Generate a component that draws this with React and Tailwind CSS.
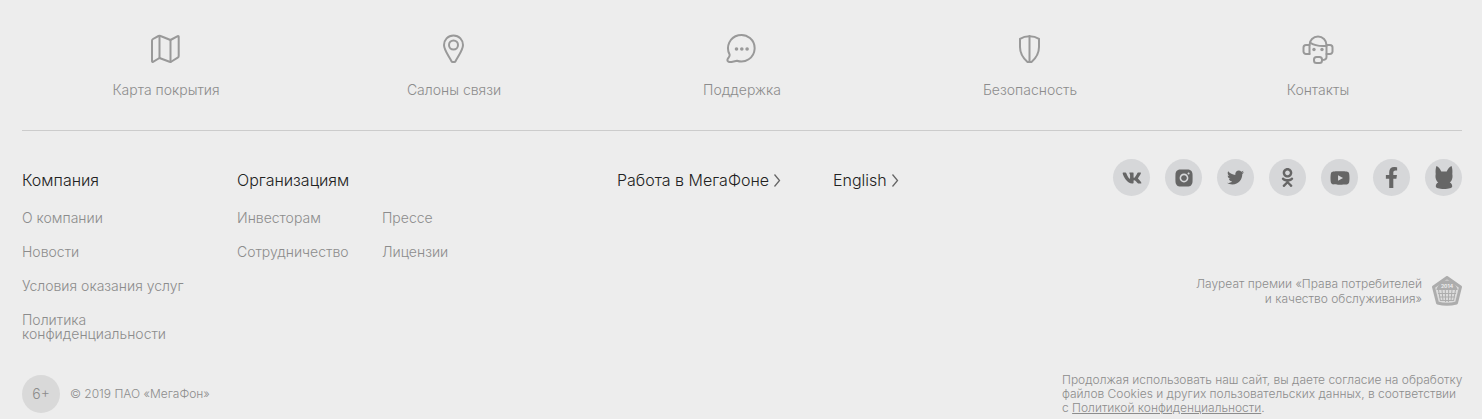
import { FaVk, FaTwitter, FaOdnoklassniki, FaYoutube, FaFacebookF } from 'react-icons/fa'
import { AiFillInstagram } from 'react-icons/ai'

const line = { fill: 'none', stroke: '#999', strokeWidth: 2, strokeLinejoin: 'round', strokeLinecap: 'round' }

function MapIcon() {
  return (
    <svg width="32" height="32" viewBox="0 0 32 32" {...line}>
      <path d="M2 7.500a2 2 0 0 1 1-1.500L8.500 3q1-.5 2 0l10 4 7.200-3.900a.7.7 0 0 1 1 .6V23q0 1-1 1.700L21.500 28.500q-1 .7-2 .2L9.500 25l-6.500 3.900a.7.7 0 0 1-1-.6z" />
      <path d="M9.500 3v22M20.500 7v22" />
    </svg>
  )
}

function PinIcon() {
  return (
    <svg width="32" height="32" viewBox="0 0 32 32" {...line}>
      <path d="M15.500 2.500C9.800 2.500 6 6.900 6 12c0 5 4.500 10.500 7.500 16.200.3.600.6.800 1 .8h2c.4 0 .7-.2 1-.8C20.500 22.500 25 17 25 12c0-5.100-3.800-9.500-9.500-9.500z" />
      <circle cx="15.500" cy="12" r="4.500" />
    </svg>
  )
}

function ChatIcon() {
  return (
    <svg width="32" height="32" viewBox="0 0 32 32" {...line}>
      <path d="M3.600 21.500A13.300 13.300 0 1 1 11 27.800L5.500 29c-2.500.5-4.500-.8-4-2.500.8-2 2.600-2.600 2.100-5z" />
      <g fill="#999" stroke="none">
        <circle cx="10.500" cy="16" r="1.800" />
        <circle cx="15.800" cy="16" r="1.800" />
        <circle cx="21.100" cy="16" r="1.800" />
      </g>
    </svg>
  )
}

function ShieldIcon() {
  return (
    <svg width="32" height="32" viewBox="0 0 32 32" {...line}>
      <path d="M6 5.800C11.500 2.400 19.500 2.400 25 5.800V14c0 7-3.500 11.500-7.500 15h-4C9.500 25.500 6 21 6 14z" />
      <path d="M15.500 3v26" />
    </svg>
  )
}

function SupportIcon() {
  return (
    <svg width="32" height="32" viewBox="0 0 32 32" {...line}>
      <path d="M7.500 21V12a8.500 8.500 0 0 1 17 0v12c0 2-1.500 3-4.500 3" />
      <path d="M7.500 12H4a2.500 2.500 0 0 0-2.500 2.500v4A2.500 2.500 0 0 0 4 21h3.500M24.500 12H28a2.500 2.500 0 0 1 2.500 2.500v4A2.500 2.500 0 0 1 28 21h-3.500" />
      <path d="M8 9.500c4 3 9 4 16.500 3.500" />
      <rect x="12" y="24" width="8" height="6" rx="2.500" />
      <g fill="#999" stroke="none">
        <circle cx="12" cy="16.500" r="1.700" />
        <circle cx="20" cy="16.500" r="1.700" />
      </g>
    </svg>
  )
}

function CatIcon() {
  return (
    <svg width="18" height="23" viewBox="0 0 18 23" fill="currentColor">
      <path d="M1.400 0C3.300.8 5.300 3 6.300 5.600h5.400C12.700 3 14.700.8 16.600 0c.8 2.700 1 5.500.7 8 .5 2.500.2 4.700-.8 6.400-.7 1.100-1.200 1.700-1.800 2.100 1.700.6 2.500 2 2.500 3.800 0 1.900-3.400 2.700-8.200 2.700S.8 22.200.8 20.300c0-1.800.8-3.200 2.500-3.800-.6-.4-1.100-1-1.800-2.100C.5 12.700.2 10.500.7 8 .4 5.500.6 2.700 1.400 0z" />
    </svg>
  )
}

function AwardIcon() {
  return (
    <svg width="30" height="30" viewBox="0 0 30 30" className="shrink-0 text-[#adadad]">
      <path d="M15 1.500 28.500 11 24.500 27Q15 29.500 5.500 27L1.500 11z" fill="#dcdcdc" stroke="currentColor" strokeWidth="3" strokeLinejoin="round" />
      <path d="M4.500 13C6.500 8 10.500 4.500 15 4.500S23.500 8 25.500 13z" fill="currentColor" />
      <text x="15" y="12" textAnchor="middle" fontSize="5" fontWeight="700" fill="#ededed">2014</text>
      <path d="M4.500 13.500h21M6 17.500h18M7 21h16M8 24.500h14M6.500 14l2 11M10 14l1 11M13.300 14l.3 12M16.700 14l-.3 12M20 14l-1 11M23.500 14l-2 11" fill="none" stroke="currentColor" />
    </svg>
  )
}

function Chevron() {
  return (
    <svg width="8" height="13" viewBox="0 0 8 13" fill="none" stroke="#666" strokeWidth="1.300" aria-hidden="true">
      <path d="M1.500.5 6.500 6.500l-5 6" />
    </svg>
  )
}

const services = [
  { label: 'Карта покрытия', icon: MapIcon },
  { label: 'Салоны связи', icon: PinIcon },
  { label: 'Поддержка', icon: ChatIcon },
  { label: 'Безопасность', icon: ShieldIcon },
  { label: 'Контакты', icon: SupportIcon },
]

const company = ['О компании', 'Новости', 'Условия оказания услуг', 'Политика конфиденциальности']
const organizations = ['Инвесторам', 'Прессе', 'Сотрудничество', 'Лицензии']

const socials = [
  { label: 'ВКонтакте', icon: FaVk, size: 20 },
  { label: 'Instagram', icon: AiFillInstagram, size: 22 },
  { label: 'Twitter', icon: FaTwitter, size: 17 },
  { label: 'Одноклассники', icon: FaOdnoklassniki, size: 19 },
  { label: 'YouTube', icon: FaYoutube, size: 20 },
  { label: 'Facebook', icon: FaFacebookF, size: 21 },
  { label: 'Блог', icon: CatIcon },
]

export default function App() {
  return (
    <footer className="min-h-screen bg-[#ededed] pl-[22px] pr-5 pt-[33px] font-['Inter',sans-serif] font-light text-sm leading-[14px] text-[#8c8c8c]">
      <nav className="grid grid-cols-5 border-b border-[#ccc] pb-[33px]">
        {services.map((s) => (
          <a key={s.label} href="#" className="flex flex-col items-center gap-[18px]">
            <s.icon />
            {s.label}
          </a>
        ))}
      </nav>

      <div className="grid grid-cols-[215fr_380fr_216fr_629fr] pt-7">
        <div>
          <h2 className="pt-[11px] text-base leading-5 text-[#222]">Компания</h2>
          <ul className="mt-[21px] flex w-44 flex-col gap-5">
            {company.map((item) => (
              <li key={item}><a href="#">{item}</a></li>
            ))}
          </ul>
        </div>
        <div>
          <h2 className="pt-[11px] text-base leading-5 text-[#222]">Организациям</h2>
          <ul className="mt-[21px] grid grid-cols-[145fr_235fr] gap-y-5">
            {organizations.map((item) => (
              <li key={item}><a href="#">{item}</a></li>
            ))}
          </ul>
        </div>
        <a href="#" className="mt-[11px] flex h-5 items-center gap-1 text-base text-[#222]">Работа в МегаФоне <Chevron /></a>
        <div className="flex items-start justify-between">
          <a href="#" className="mt-[11px] flex h-5 items-center gap-1 text-base text-[#222]">English <Chevron /></a>
          <div className="flex flex-col items-end gap-20">
            <div className="flex gap-[15px]">
              {socials.map((s) => (
                <a key={s.label} href="#" aria-label={s.label} className="flex size-[37px] items-center justify-center rounded-full bg-[#d6d7d9] text-[#666]">
                  <s.icon size={s.size} />
                </a>
              ))}
            </div>
            <div className="flex items-center gap-[10px] text-right text-xs leading-[15px]">
              <p>Лауреат премии «Права потребителей<br />и качество обслуживания»</p>
              <AwardIcon />
            </div>
          </div>
        </div>
      </div>

      <div className="mt-8 flex items-center justify-between text-xs leading-[14px]">
        <div className="flex items-center gap-[10px]">
          <span className="flex size-[38px] items-center justify-center rounded-full bg-[#d9d9d9] text-sm">6+</span>
          © 2019 ПАО «МегаФон»
        </div>
        <p className="w-[400px] whitespace-nowrap">
          Продолжая использовать наш сайт, вы даете согласие на обработку<br />
          файлов Cookies и других пользовательских данных, в соответствии<br />
          с <a href="#" className="underline">Политикой конфиденциальности</a>.
        </p>
      </div>
    </footer>
  )
}
